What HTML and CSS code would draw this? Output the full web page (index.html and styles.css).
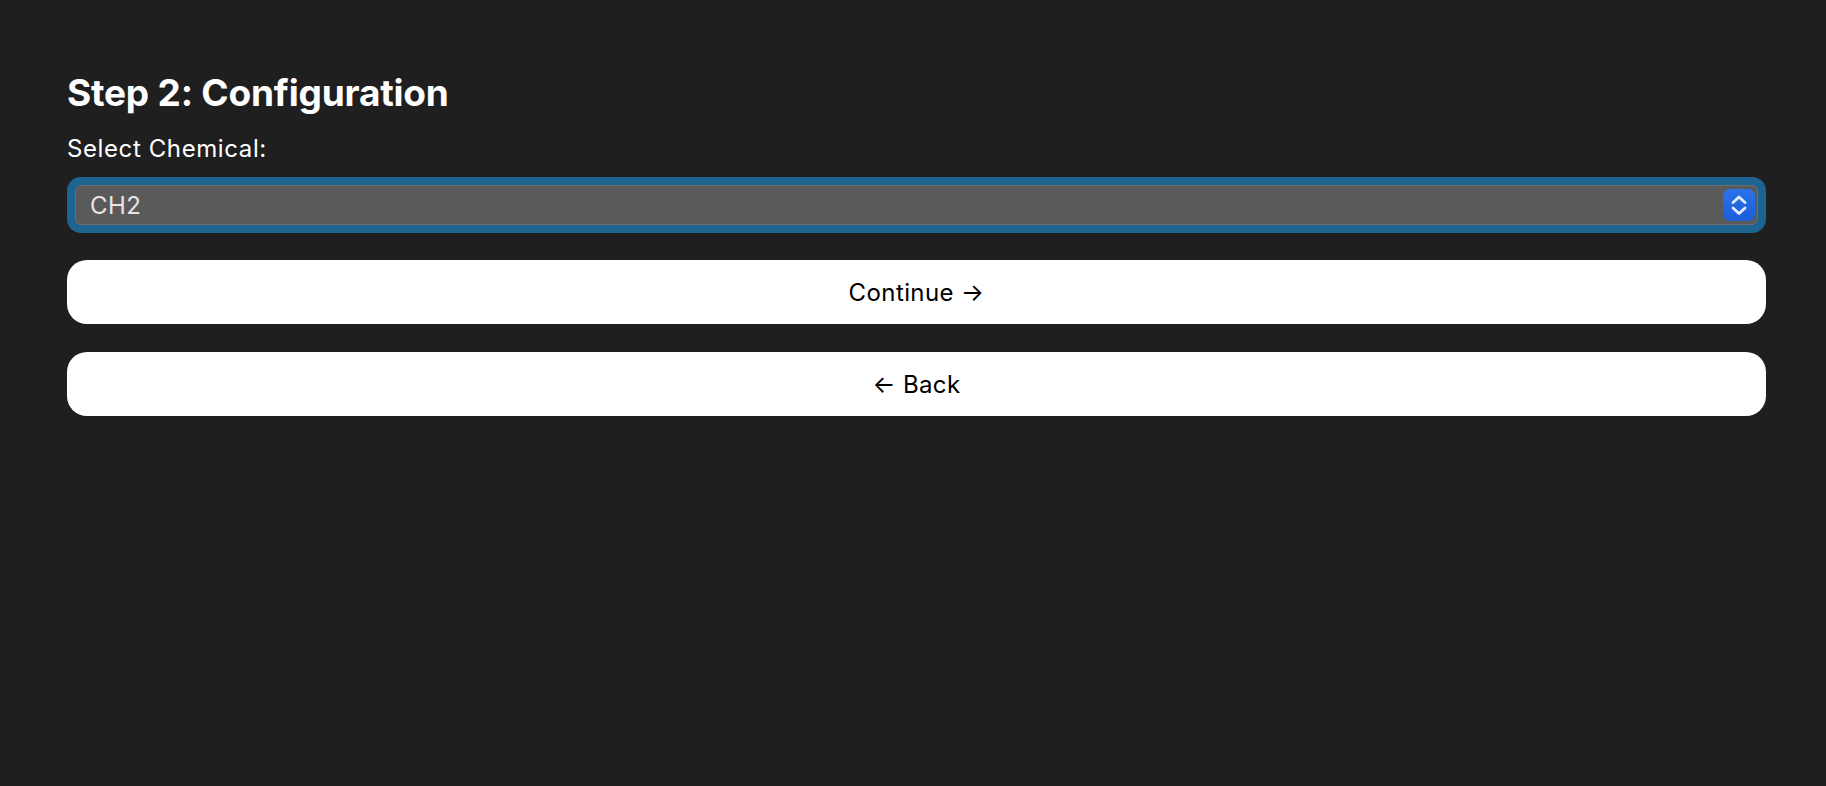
FILE: index.html
```html
<!DOCTYPE html>
<html lang="en">
<head>
<meta charset="utf-8">
<title>Step 2: Configuration</title>
<link rel="stylesheet" href="styles.css">
</head>
<body>
<main class="page">
  <h1 class="title">Step 2: Configuration</h1>
  <label class="label">Select Chemical:</label>
  <div class="ring">
    <div class="select">
      <span class="select-value">CH2</span>
      <span class="stepper">
        <svg width="32" height="32" viewBox="0 0 32 32" aria-hidden="true">
          <path d="M10 13.5 L16 8 L22 13.5" fill="none" stroke="#e3ebff" stroke-width="2.8" stroke-linecap="round" stroke-linejoin="round"/>
          <path d="M10 19 L16 24.5 L22 19" fill="none" stroke="#e3ebff" stroke-width="2.8" stroke-linecap="round" stroke-linejoin="round"/>
        </svg>
      </span>
    </div>
  </div>
  <button class="btn">Continue →</button>
  <button class="btn">← Back</button>
</main>
</body>
</html>
```

FILE: styles.css
```css
html, body {
  margin: 0;
  padding: 0;
  background: #1f1f1f;
}
body {
  font-family: Inter, "Noto Sans", sans-serif;
  color: #ffffff;
}
.page {
  display: flex;
  flex-direction: column;
  padding: 71px 60px 0 67px;
}
.title {
  margin: 0;
  font-size: 37px;
  line-height: 44px;
  font-weight: 700;
  letter-spacing: -0.2px;
}
.label {
  margin-top: 19px;
  font-size: 24px;
  line-height: 29px;
  font-weight: 400;
  letter-spacing: 0.6px;
}
.ring {
  margin-top: 14px;
  padding: 8px;
  background: #1d6491;
  border-radius: 14px;
}
.select {
  display: flex;
  align-items: center;
  justify-content: space-between;
  height: 38px;
  padding: 0 2px 0 14px;
  background: #5a5a5a;
  border: 1px solid #6e6e6e;
  border-radius: 6px;
}
.select-value {
  font-size: 24px;
  letter-spacing: 0.5px;
  color: #e6e6e6;
}
.stepper {
  display: flex;
  width: 32px;
  height: 32px;
  border-radius: 7px;
  background: linear-gradient(#2b72ea, #1a5ed6);
}
.btn {
  margin-top: 27px;
  height: 64px;
  border: none;
  border-radius: 20px;
  background: #ffffff;
  color: #000000;
  font-family: Inter, "Noto Sans", sans-serif;
  font-size: 24px;
  font-weight: 400;
  letter-spacing: 0.4px;
  cursor: pointer;
}
.btn + .btn {
  margin-top: 28px;
}
```
